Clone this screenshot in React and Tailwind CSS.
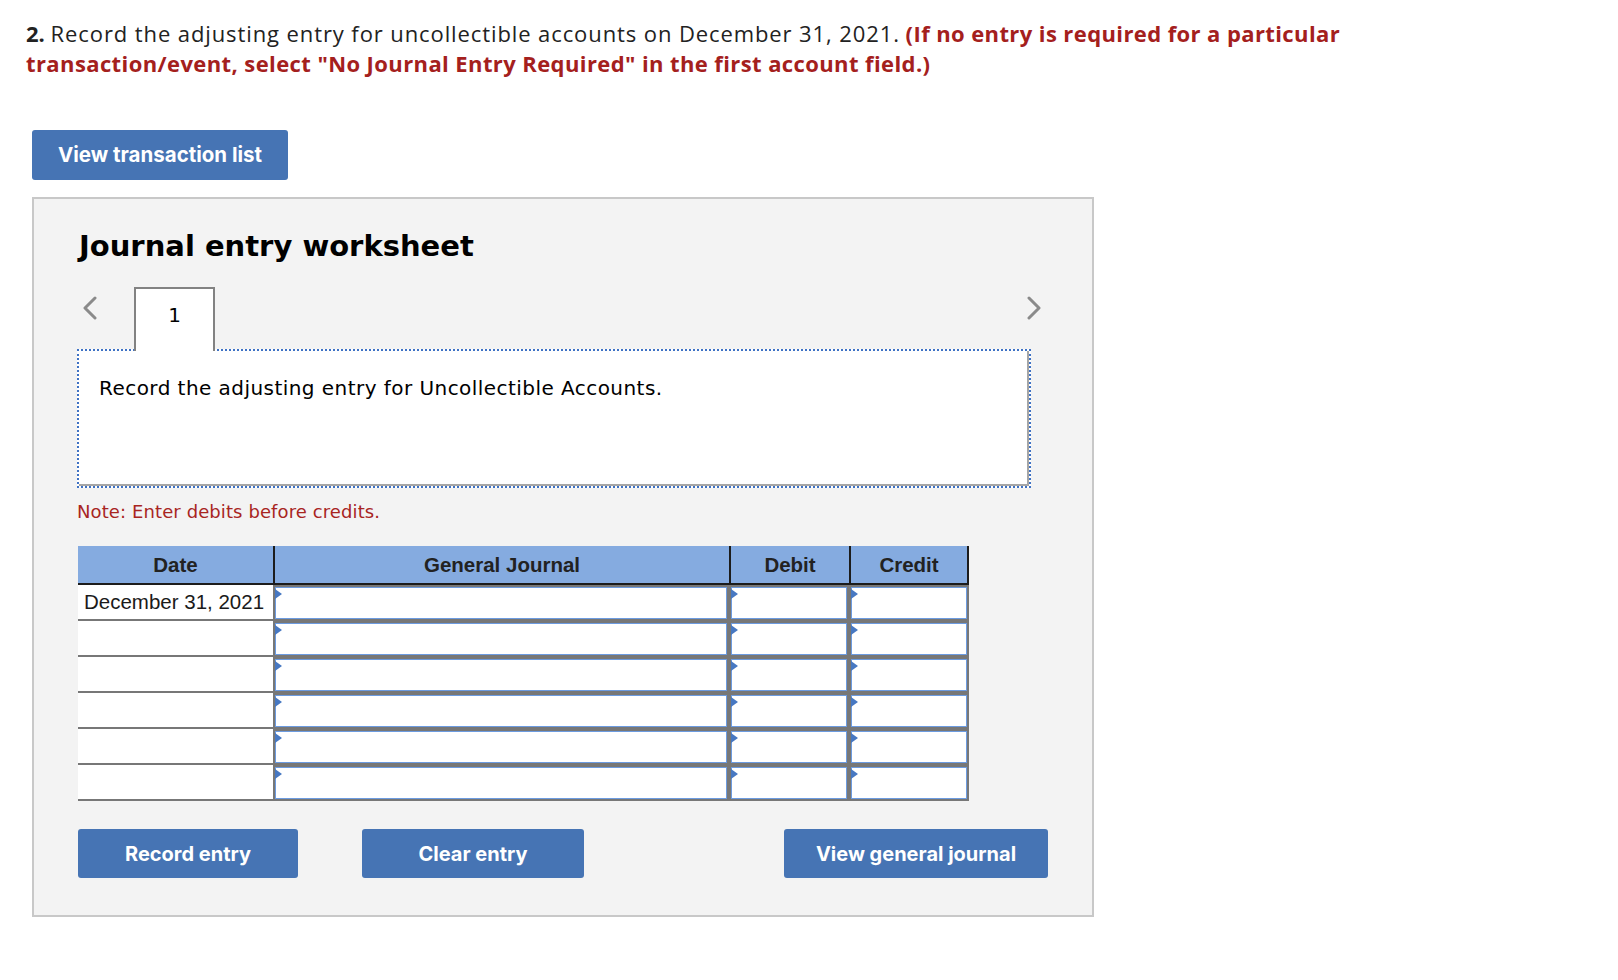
import React from "react";

const rows = ["December 31, 2021", "", "", "", "", ""];

function Chevron({ dir }) {
  return (
    <svg width="16" height="24" viewBox="0 0 16 24" fill="none">
      <polyline
        points={dir === "left" ? "13,2 3,12 13,22" : "3,2 13,12 3,22"}
        stroke="#8a8a8a"
        strokeWidth="3"
        strokeLinecap="round"
        strokeLinejoin="round"
      />
    </svg>
  );
}

function EntryCell() {
  return (
    <div className="h-[36px] bg-[#777777] p-[2px]">
      <div className="relative h-full bg-white border border-[#6c9be0]">
        <span className="absolute top-[1px] left-[-1px] w-0 h-0 border-y-[5px] border-y-transparent border-l-[7px] border-l-[#4778c2]" />
      </div>
    </div>
  );
}

function BlueButton({ children, className }) {
  return (
    <button
      className={
        "h-[49px] rounded-[3px] bg-[#4674b4] text-white text-[20px] font-bold font-['Inter',sans-serif] " +
        className
      }
    >
      {children}
    </button>
  );
}

export default function App() {
  return (
    <div className="min-h-screen bg-white pt-[18px] pl-[26px] font-['Open_Sans',sans-serif]">
      <p className="text-[22px] leading-[30px] text-[#222222]">
        <span className="font-bold">2.</span>{" "}
        <span className="tracking-[0.9px]">
          Record the adjusting entry for uncollectible accounts on December 31, 2021.
        </span>{" "}
        <span className="font-bold tracking-[0.4px] text-[#a4201d]">
          (If no entry is required for a particular
          <br />
          transaction/event, select "No Journal Entry Required" in the first account field.)
        </span>
      </p>

      <button className="mt-[52px] ml-[6px] h-[50px] w-[256px] rounded-[3px] bg-[#4674b4] text-white text-[20.5px] font-bold font-['Inter',sans-serif]">
        View transaction list
      </button>

      <div className="mt-[17px] ml-[6px] w-[1062px] border-2 border-[#c8c8c8] bg-[#f3f3f3] pt-[30px] pl-[45px] pr-[42px] pb-[37px]">
        <h2 className="text-[29px] leading-[34px] font-bold text-black font-['DejaVu_Sans',sans-serif]">
          Journal entry worksheet
        </h2>

        <div className="mt-[24px] -ml-[2px] flex items-start w-[971px]">
          <div className="ml-[5px] mt-[9px]">
            <Chevron dir="left" />
          </div>
          <div className="relative z-10 ml-[36px] -mb-[2px] h-[64px] w-[81px] border-2 border-b-0 border-[#828282] bg-white flex justify-center pt-[14px] text-[20px] leading-[24px] text-black font-['DejaVu_Sans',sans-serif]">
            1
          </div>
          <div className="ml-auto mr-[6px] mt-[9px]">
            <Chevron dir="right" />
          </div>
        </div>

        <div className="-ml-[2px] w-[954px] h-[139px] border-2 border-dotted border-[#3f72c4] bg-white">
          <div className="h-full border-r-2 border-b-2 border-[#a6a6a6] pl-[20px] pt-[25px] text-[20px] leading-[24px] tracking-[0.45px] text-black font-['DejaVu_Sans',sans-serif]">
            Record the adjusting entry for Uncollectible Accounts.
          </div>
        </div>

        <p className="mt-[14px] -ml-[2px] text-[18px] leading-[20px] tracking-[0.1px] text-[#a8251f] font-['DejaVu_Sans',sans-serif]">
          Note: Enter debits before credits.
        </p>

        <div className="mt-[24px] -ml-[1px] w-[891px] font-['Liberation_Sans',Arial,sans-serif]">
          <div className="grid grid-cols-[195px_456px_120px_120px] bg-[#85abe0] text-[20.5px] font-bold text-[#222222]">
            <div className="h-[39px] pt-[1px] border-b-2 border-[#1c1c1c] flex items-center justify-center">Date</div>
            <div className="h-[39px] pt-[1px] border-b-2 border-l-2 border-[#1c1c1c] flex items-center justify-center">General Journal</div>
            <div className="h-[39px] pt-[1px] border-b-2 border-l-2 border-[#1c1c1c] flex items-center justify-center">Debit</div>
            <div className="h-[39px] pt-[1px] border-b-2 border-l-2 border-r-2 border-[#1c1c1c] flex items-center justify-center">Credit</div>
          </div>
          {rows.map((d, i) => (
            <div key={i} className="grid grid-cols-[195px_456px_120px_120px]">
              <div className="h-[36px] bg-white border-b-2 border-[#777777] pl-[6px] flex items-center text-[20.5px] text-[#1a1a1a]">
                {d}
              </div>
              <EntryCell />
              <EntryCell />
              <EntryCell />
            </div>
          ))}
        </div>

        <div className="mt-[28px] -ml-[2px] flex">
          <BlueButton className="ml-[1px] w-[220px]">Record entry</BlueButton>
          <BlueButton className="ml-[64px] w-[222px]">Clear entry</BlueButton>
          <BlueButton className="ml-[200px] w-[264px]">View general journal</BlueButton>
        </div>
      </div>
    </div>
  );
}
